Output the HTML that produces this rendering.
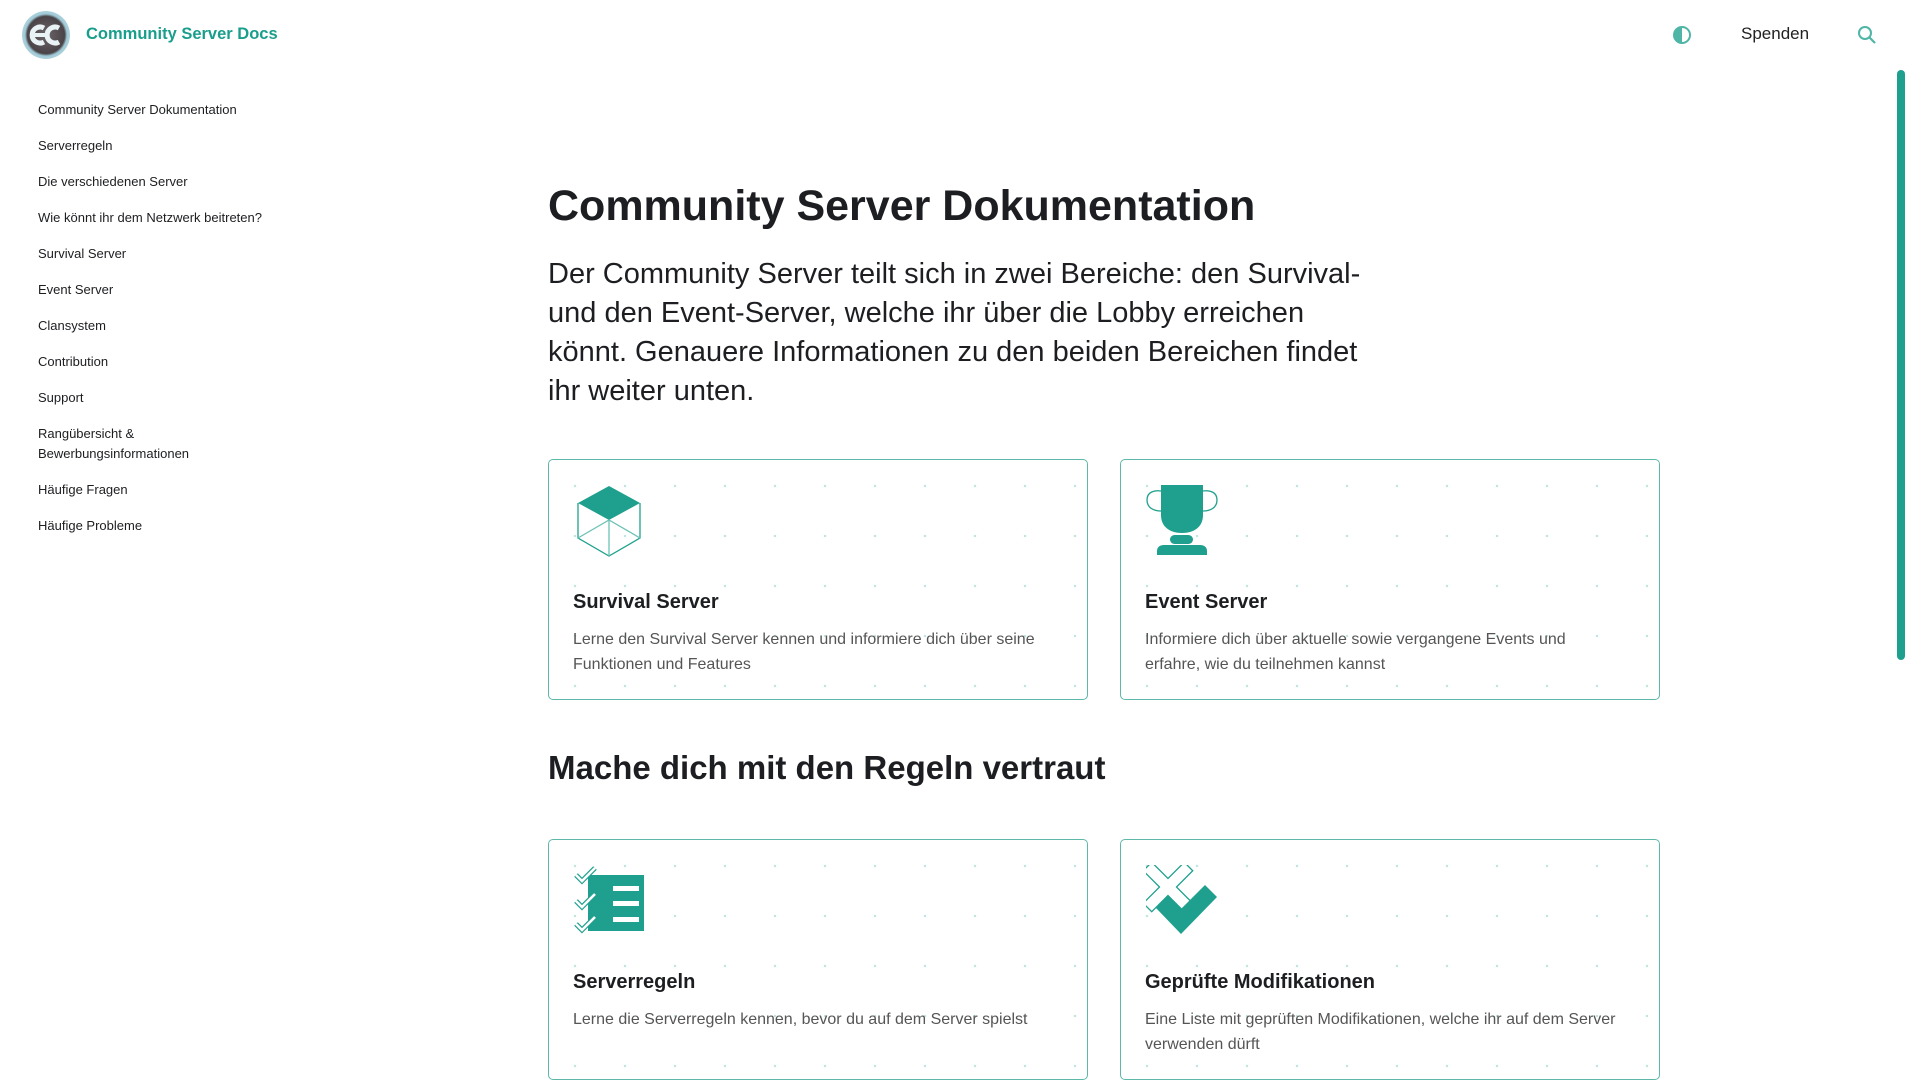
<!DOCTYPE html>
<html><head><meta charset="utf-8"><style>
*{box-sizing:border-box}
body{margin:0;width:1920px;height:1080px;overflow:hidden;background:#fff;font-family:"Liberation Sans",Arial,sans-serif;color:#1c1e21;position:relative}
.logo{position:absolute;left:22px;top:11px;width:48px;height:48px;border-radius:50%;background:radial-gradient(circle,#6b6468 0,#4a4448 55%,#9fc9d6 62%,#dff0f5 100%)}
.brand{position:absolute;left:86px;top:25px;font-size:16.5px;font-weight:bold;color:#1a9e8c}
.spenden{position:absolute;left:1741px;top:24px;font-size:17px;color:#222}
.sb{position:absolute;left:1897px;top:70px;width:8px;height:590px;background:#1fa08e;border-radius:4px}
.side a{position:absolute;left:38px;font-size:13px;color:#1c1e21;line-height:19.6px;text-decoration:none}
h1{position:absolute;left:548px;top:178px;margin:0;font-size:43px;font-weight:bold;line-height:56px}
.lead{position:absolute;left:548px;top:255px;width:830px;margin:0;font-size:29px;line-height:39px;color:#1c1e21}
h2{position:absolute;left:548px;top:746px;margin:0;font-size:33px;font-weight:bold;line-height:44px}
.card{position:absolute;width:540px;height:241px;border:1.3px solid #5db8a9;border-radius:5px;
background-image:radial-gradient(circle,#c3e5df 1.1px,transparent 1.4px);background-size:50px 50px;background-position:1px 1px}
.card svg{position:absolute;left:28px;top:25px}
.card .t{position:absolute;left:24px;top:131px;font-size:20px;font-weight:bold;color:#1c1e21}
.card .d{position:absolute;left:24px;top:168px;width:476px;font-size:16px;line-height:24.5px;color:#555}
</style></head><body>
<div class="logo"><svg width="48" height="48" viewBox="0 0 48 48"><g fill="none" stroke="#e9f3f5" stroke-width="5"><path d="M22 17a8 8 0 1 0 0 14"/><path d="M37 17a8 8 0 1 0 0 14"/></g><rect x="9" y="22" width="14" height="4" fill="#e9f3f5"/></svg></div>
<div class="brand">Community Server Docs</div>
<svg style="position:absolute;left:1673px;top:26px" width="18" height="18" viewBox="0 0 18 18"><circle cx="9" cy="9" r="8" fill="none" stroke="#4fb5a6" stroke-width="2"/><path d="M9 1a8 8 0 0 0 0 16z" fill="#4fb5a6"/></svg>
<div class="spenden">Spenden</div>
<svg style="position:absolute;left:1857px;top:25px" width="20" height="20" viewBox="0 0 20 20"><circle cx="8" cy="8" r="6" fill="none" stroke="#4fb5a6" stroke-width="2"/><path d="M12.5 12.5L18 18" stroke="#4fb5a6" stroke-width="2.2"/></svg>
<div class="sb"></div>
<div class="side">
<a style="top:100px">Community Server Dokumentation</a>
<a style="top:136px">Serverregeln</a>
<a style="top:172px">Die verschiedenen Server</a>
<a style="top:208px">Wie könnt ihr dem Netzwerk beitreten?</a>
<a style="top:244px">Survival Server</a>
<a style="top:280px">Event Server</a>
<a style="top:316px">Clansystem</a>
<a style="top:352px">Contribution</a>
<a style="top:388px">Support</a>
<a style="top:424px">Rangübersicht &amp;<br>Bewerbungsinformationen</a>
<a style="top:480px">Häufige Fragen</a>
<a style="top:516px">Häufige Probleme</a>
</div>
<h1>Community Server Dokumentation</h1>
<p class="lead">Der Community Server teilt sich in zwei Bereiche: den Survival-<br>und den Event-Server, welche ihr über die Lobby erreichen<br>könnt. Genauere Informationen zu den beiden Bereichen findet<br>ihr weiter unten.</p>

<div class="card" style="left:548px;top:459px">
<svg width="64" height="72" viewBox="0 0 64 72"><path d="M32 1L63 18L32 35L1 18Z" fill="#1fa08e"/><g fill="none" stroke="#1fa08e" stroke-width="1.3"><path d="M1 18V53L32 71L63 53V18"/><path d="M1 53L32 35L63 53M32 35V71" stroke="#6cc2b5"/></g></svg>
<div class="t">Survival Server</div>
<div class="d">Lerne den Survival Server kennen und informiere dich über seine Funktionen und Features</div>
</div>
<div class="card" style="left:1120px;top:459px">
<svg width="72" height="72" viewBox="0 0 72 72" style="left:25px"><g fill="none" stroke="#1fa08e" stroke-width="1.3"><path d="M15 6C8 5 1 7 1 15S8 26 15 26"/><path d="M57 6C64 5 71 7 71 15S64 26 57 26"/></g><path d="M15 0H57V30C57 42 48 48 36 48S15 42 15 30Z" fill="#1fa08e"/><rect x="24" y="50" width="23" height="9" rx="4.5" fill="#1fa08e"/><path d="M11 70V66C11 62 14 60 18 60H54C58 60 61 62 61 66V70Z" fill="#1fa08e"/></svg>
<div class="t">Event Server</div>
<div class="d">Informiere dich über aktuelle sowie vergangene Events und erfahre, wie du teilnehmen kannst</div>
</div>

<h2>Mache dich mit den Regeln vertraut</h2>

<div class="card" style="left:548px;top:839px">
<svg width="72" height="72" viewBox="0 0 72 72" style="left:25px"><rect x="14" y="10" width="56" height="56" fill="#1fa08e"/><g fill="#fff"><rect x="39" y="21" width="26" height="5"/><rect x="39" y="36" width="26" height="5"/><rect x="39" y="52" width="26" height="5"/></g><g fill="none"><g stroke="#1fa08e" stroke-width="5"><path d="M2 10L8 16L21 3"/><path d="M2 36L8 42L21 29"/><path d="M2 59L8 65L21 52"/></g><g stroke="#fff" stroke-width="2.6"><path d="M2 10L8 16L21 3"/><path d="M2 36L8 42L21 29"/><path d="M2 59L8 65L21 52"/></g></g></svg>
<div class="t">Serverregeln</div>
<div class="d">Lerne die Serverregeln kennen, bevor du auf dem Server spielst</div>
</div>
<div class="card" style="left:1120px;top:839px">
<svg width="74" height="74" viewBox="0 0 74 74" style="left:25px"><g transform="translate(22 22) rotate(45)"><path d="M6 6V29H-6V6H-29V-6H-6V-29H6V-6H29V6Z" fill="#fff" stroke="#1fa08e" stroke-width="1.3"/></g><path d="M10 43L22 31L35 44L59 20L71 32L35 69Z" fill="#1fa08e"/></svg>
<div class="t">Geprüfte Modifikationen</div>
<div class="d">Eine Liste mit geprüften Modifikationen, welche ihr auf dem Server verwenden dürft</div>
</div>
</body></html>
